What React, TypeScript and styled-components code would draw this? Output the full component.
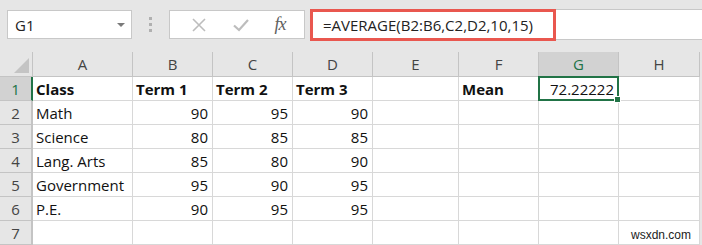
import * as React from 'react'
import styled, { createGlobalStyle } from 'styled-components'

const COLS = [
  { key: 'A', width: 100 },
  { key: 'B', width: 80 },
  { key: 'C', width: 80 },
  { key: 'D', width: 80 },
  { key: 'E', width: 86 },
  { key: 'F', width: 80 },
  { key: 'G', width: 80 },
  { key: 'H', width: 81 },
]

type CellValue = { text: string; bold?: boolean; num?: boolean }

const ROWS: CellValue[][] = [
  [
    { text: 'Class', bold: true },
    { text: 'Term 1', bold: true },
    { text: 'Term 2', bold: true },
    { text: 'Term 3', bold: true },
    { text: '' },
    { text: 'Mean', bold: true },
    { text: '72.22222', num: true },
    { text: '' },
  ],
  [{ text: 'Math' }, { text: '90', num: true }, { text: '95', num: true }, { text: '90', num: true }],
  [{ text: 'Science' }, { text: '80', num: true }, { text: '85', num: true }, { text: '85', num: true }],
  [{ text: 'Lang. Arts' }, { text: '85', num: true }, { text: '80', num: true }, { text: '90', num: true }],
  [{ text: 'Government' }, { text: '95', num: true }, { text: '90', num: true }, { text: '95', num: true }],
  [{ text: 'P.E.' }, { text: '90', num: true }, { text: '95', num: true }, { text: '95', num: true }],
  [],
]

const GlobalStyle = createGlobalStyle`
  body {
    margin: 0;
    background: #e6e6e6;
    font-family: "Open Sans", "Liberation Sans", sans-serif;
  }
`

const Page = styled.div`
  width: 702px;
  height: 245px;
  overflow: hidden;
  background: #e6e6e6;
`

const Toolbar = styled.div`
  display: flex;
  align-items: center;
  height: 49px;
  padding: 0 0 0 7px;
`

const NameBox = styled.div`
  display: flex;
  align-items: center;
  justify-content: space-between;
  box-sizing: border-box;
  width: 125px;
  height: 29px;
  background: #fff;
  border: 1px solid #c8c8c8;
  padding: 0 6px 0 7px;
  font-size: 15px;
  color: #222;
`

const DropArrow = styled.span`
  width: 0;
  height: 0;
  border-left: 4px solid transparent;
  border-right: 4px solid transparent;
  border-top: 4px solid #7a7a7a;
`

const Grip = styled.div`
  display: flex;
  flex-direction: column;
  gap: 3px;
  margin: 0 17px 0 17px;
  span {
    width: 3px;
    height: 3px;
    background: #b0b0b0;
  }
`

const ButtonBox = styled.div`
  display: flex;
  align-items: center;
  justify-content: space-around;
  box-sizing: border-box;
  width: 136px;
  height: 29px;
  background: #fff;
  border: 1px solid #c8c8c8;
  padding: 0 6px 0 8px;
  margin-right: 5px;
`

const Fx = styled.span`
  font-family: "Liberation Serif", "DejaVu Serif", serif;
  font-style: italic;
  font-size: 18px;
  color: #606060;
  letter-spacing: -1px;
`

const FormulaBar = styled.div`
  flex: 1;
  display: flex;
  align-items: center;
  height: 29px;
  background: #fff;
  border-top: 1px solid #c8c8c8;
  border-bottom: 1px solid #c8c8c8;
`

const Highlight = styled.div`
  display: flex;
  align-items: center;
  box-sizing: border-box;
  width: 246px;
  height: 32px;
  border: 3px solid #e9574f;
  padding-left: 10px;
  font-size: 15px;
  color: #222;
  white-space: nowrap;
`

const Sheet = styled.div`
  display: grid;
  grid-template-columns: 33px ${COLS.map(c => `${c.width}px`).join(' ')};
  grid-template-rows: 25px repeat(7, 24px);
  margin-top: 3px;
`

const Corner = styled.div`
  position: relative;
  background: #e6e6e6;
  border-right: 1px solid #c4c4c4;
  border-bottom: 1px solid #c4c4c4;
  &::after {
    content: '';
    position: absolute;
    right: 3px;
    bottom: 3px;
    width: 0;
    height: 0;
    border-left: 15px solid transparent;
    border-bottom: 15px solid #c4c4c4;
  }
`

const ColHead = styled.div<{ $active?: boolean }>`
  display: flex;
  align-items: center;
  justify-content: center;
  background: ${p => (p.$active ? '#d2d2d2' : '#e6e6e6')};
  color: ${p => (p.$active ? '#217346' : '#444')};
  border-right: 1px solid #c4c4c4;
  border-bottom: 1px solid ${p => (p.$active ? '#217346' : '#c4c4c4')};
  font-size: 15px;
`

const RowHead = styled.div<{ $active?: boolean }>`
  display: flex;
  align-items: center;
  justify-content: center;
  background: ${p => (p.$active ? '#d2d2d2' : '#e6e6e6')};
  color: ${p => (p.$active ? '#217346' : '#444')};
  border-right: 2px solid ${p => (p.$active ? '#217346' : '#c4c4c4')};
  border-bottom: 1px solid #c4c4c4;
  box-sizing: border-box;
  font-size: 15px;
`

const Cell = styled.div<{ $bold?: boolean; $num?: boolean }>`
  display: flex;
  align-items: center;
  justify-content: ${p => (p.$num ? 'flex-end' : 'flex-start')};
  box-sizing: border-box;
  padding: 0 4px 0 3px;
  background: #fff;
  border-right: 1px solid #d8d8d8;
  border-bottom: 1px solid #d8d8d8;
  font-size: 15px;
  font-weight: ${p => (p.$bold ? 700 : 400)};
  color: #111;
  white-space: nowrap;
`

const ActiveCell = styled(Cell)`
  position: relative;
  border: 2px solid #217346;
  margin: -1px 0 0 -1px;
  padding-right: 3px;
  &::after {
    content: '';
    position: absolute;
    right: -4px;
    bottom: -4px;
    width: 5px;
    height: 5px;
    background: #217346;
    border: 1px solid #fff;
  }
`

const Watermark = styled.span`
  position: absolute;
  right: 8px;
  bottom: 2px;
  font-family: "Liberation Sans", Arial, sans-serif;
  font-size: 12px;
  color: #222;
`

const LastCell = styled(Cell)`
  position: relative;
`

export default function App() {
  return (
    <Page>
      <GlobalStyle />
      <Toolbar>
        <NameBox>
          G1
          <DropArrow />
        </NameBox>
        <Grip>
          <span />
          <span />
          <span />
        </Grip>
        <ButtonBox>
          <svg width="16" height="16" viewBox="0 0 16 16">
            <path d="M2 2L14 14M14 2L2 14" stroke="#bdbdbd" strokeWidth="1.6" fill="none" />
          </svg>
          <svg width="18" height="16" viewBox="0 0 18 16">
            <path d="M2 8.5L7 13L16 3" stroke="#bdbdbd" strokeWidth="2.2" fill="none" />
          </svg>
          <Fx>fx</Fx>
        </ButtonBox>
        <FormulaBar>
          <Highlight>=AVERAGE(B2:B6,C2,D2,10,15)</Highlight>
        </FormulaBar>
      </Toolbar>
      <Sheet>
        <Corner />
        {COLS.map(c => (
          <ColHead key={c.key} $active={c.key === 'G'}>
            {c.key}
          </ColHead>
        ))}
        {ROWS.map((row, r) => (
          <React.Fragment key={r}>
            <RowHead $active={r === 0}>{r + 1}</RowHead>
            {COLS.map((c, i) => {
              const v = row[i] || { text: '' }
              if (r === 0 && c.key === 'G') {
                return (
                  <ActiveCell key={c.key} $num>
                    {v.text}
                  </ActiveCell>
                )
              }
              if (r === 6 && c.key === 'H') {
                return (
                  <LastCell key={c.key}>
                    <Watermark>wsxdn.com</Watermark>
                  </LastCell>
                )
              }
              return (
                <Cell key={c.key} $bold={v.bold} $num={v.num}>
                  {v.text}
                </Cell>
              )
            })}
          </React.Fragment>
        ))}
      </Sheet>
    </Page>
  )
}
